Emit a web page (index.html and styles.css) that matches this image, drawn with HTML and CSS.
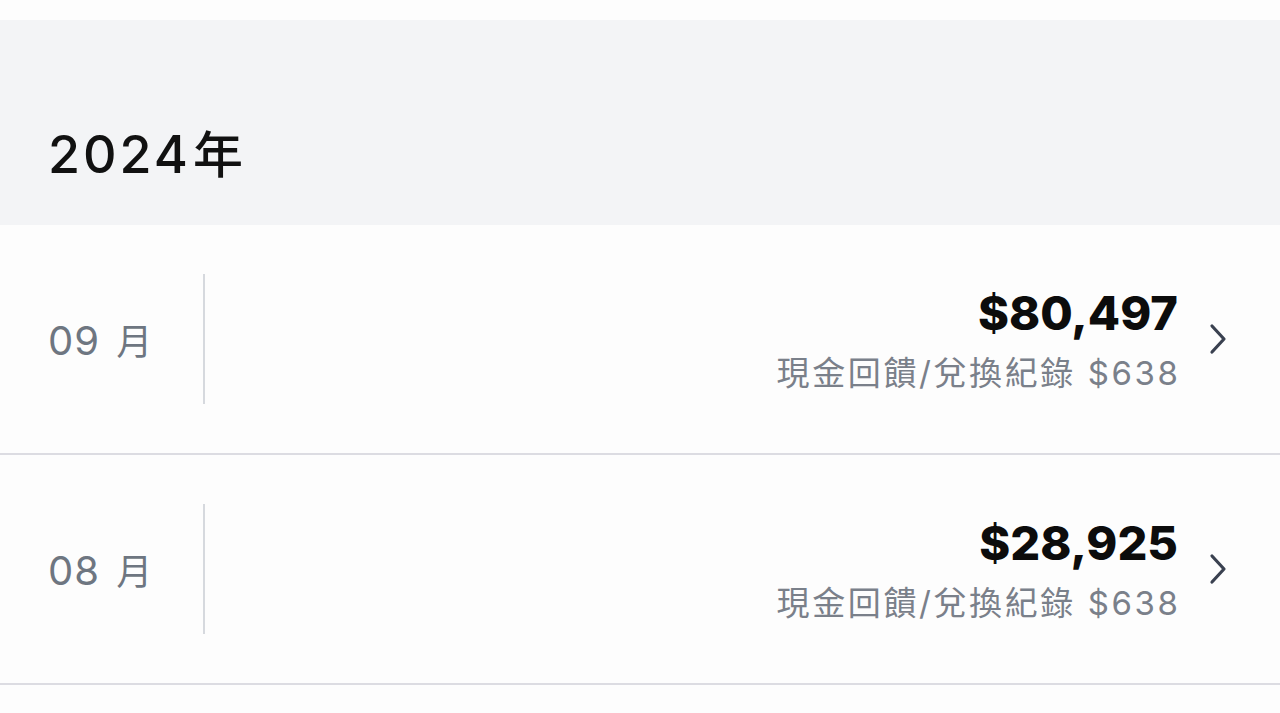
FILE: index.html
```html
<!DOCTYPE html>
<html lang="zh-Hant">
<head>
<meta charset="utf-8">
<link rel="stylesheet" href="styles.css">
</head>
<body>
<div class="page">
  <div class="top-gap"></div>
  <div class="year-band"><h2 class="year">2024<span class="cjk">年</span></h2></div>
  <div class="list">
    <div class="row">
      <div class="month">09 <span class="cjk">月</span></div>
      <div class="divider"></div>
      <div class="amounts">
        <div class="total">$80,497</div>
        <div class="sub">現金回饋/兌換紀錄 $638</div>
      </div>
      <svg class="chev" width="22" height="36" viewBox="0 0 22 36"><path d="M4 5 L16 18 L4 31" fill="none" stroke="#3a4150" stroke-width="3.2" stroke-linecap="round" stroke-linejoin="round"/></svg>
    </div>
    <div class="row">
      <div class="month">08 <span class="cjk">月</span></div>
      <div class="divider"></div>
      <div class="amounts">
        <div class="total">$28,925</div>
        <div class="sub">現金回饋/兌換紀錄 $638</div>
      </div>
      <svg class="chev" width="22" height="36" viewBox="0 0 22 36"><path d="M4 5 L16 18 L4 31" fill="none" stroke="#3a4150" stroke-width="3.2" stroke-linecap="round" stroke-linejoin="round"/></svg>
    </div>
  </div>
</div>
</body>
</html>
```
FILE: styles.css
```css
html, body {
  margin: 0;
  padding: 0;
  background: #fdfdfd;
}
body {
  font-family: "Inter", "Noto Sans CJK TC", sans-serif;
  width: 1280px;
  height: 713px;
  overflow: hidden;
}
.page {
  display: flex;
  flex-direction: column;
}
.top-gap {
  height: 20px;
  background: #fdfdfd;
}
.year-band {
  height: 205px;
  background: #f3f4f6;
  display: flex;
  align-items: flex-end;
  padding-left: 48px;
  box-sizing: border-box;
  padding-bottom: 40px;
}
.year {
  margin: 0;
  font-size: 52px;
  font-weight: 500;
  color: #111;
  line-height: 60px;
  letter-spacing: 3px;
}
.year .cjk {
  font-size: 50px;
  letter-spacing: 0;
  margin-left: 2px;
}
.list {
  display: flex;
  flex-direction: column;
}
.row {
  height: 230px;
  box-sizing: border-box;
  border-bottom: 2px solid #dcdce2;
  display: flex;
  align-items: center;
  padding-left: 48px;
  padding-right: 50px;
}
.month {
  width: 155px;
  font-size: 40px;
  color: #6e7681;
  font-weight: 400;
  letter-spacing: 1px;
}
.month .cjk {
  font-size: 36px;
  margin-left: 4px;
}
.divider {
  width: 2px;
  height: 130px;
  background: #d6d9de;
}
.amounts {
  flex: 1;
  display: flex;
  flex-direction: column;
  align-items: flex-end;
}
.total {
  font-size: 47px;
  font-weight: 800;
  color: #0c0c0c;
  line-height: 52px;
  letter-spacing: 0;
  margin-top: 4px;
}
.sub {
  font-size: 33px;
  color: #7a808a;
  line-height: 44px;
  margin-top: 12px;
  letter-spacing: 2.6px;
  margin-right: -2.6px;
}
.chev {
  margin-left: 30px;
  display: block;
}
```
